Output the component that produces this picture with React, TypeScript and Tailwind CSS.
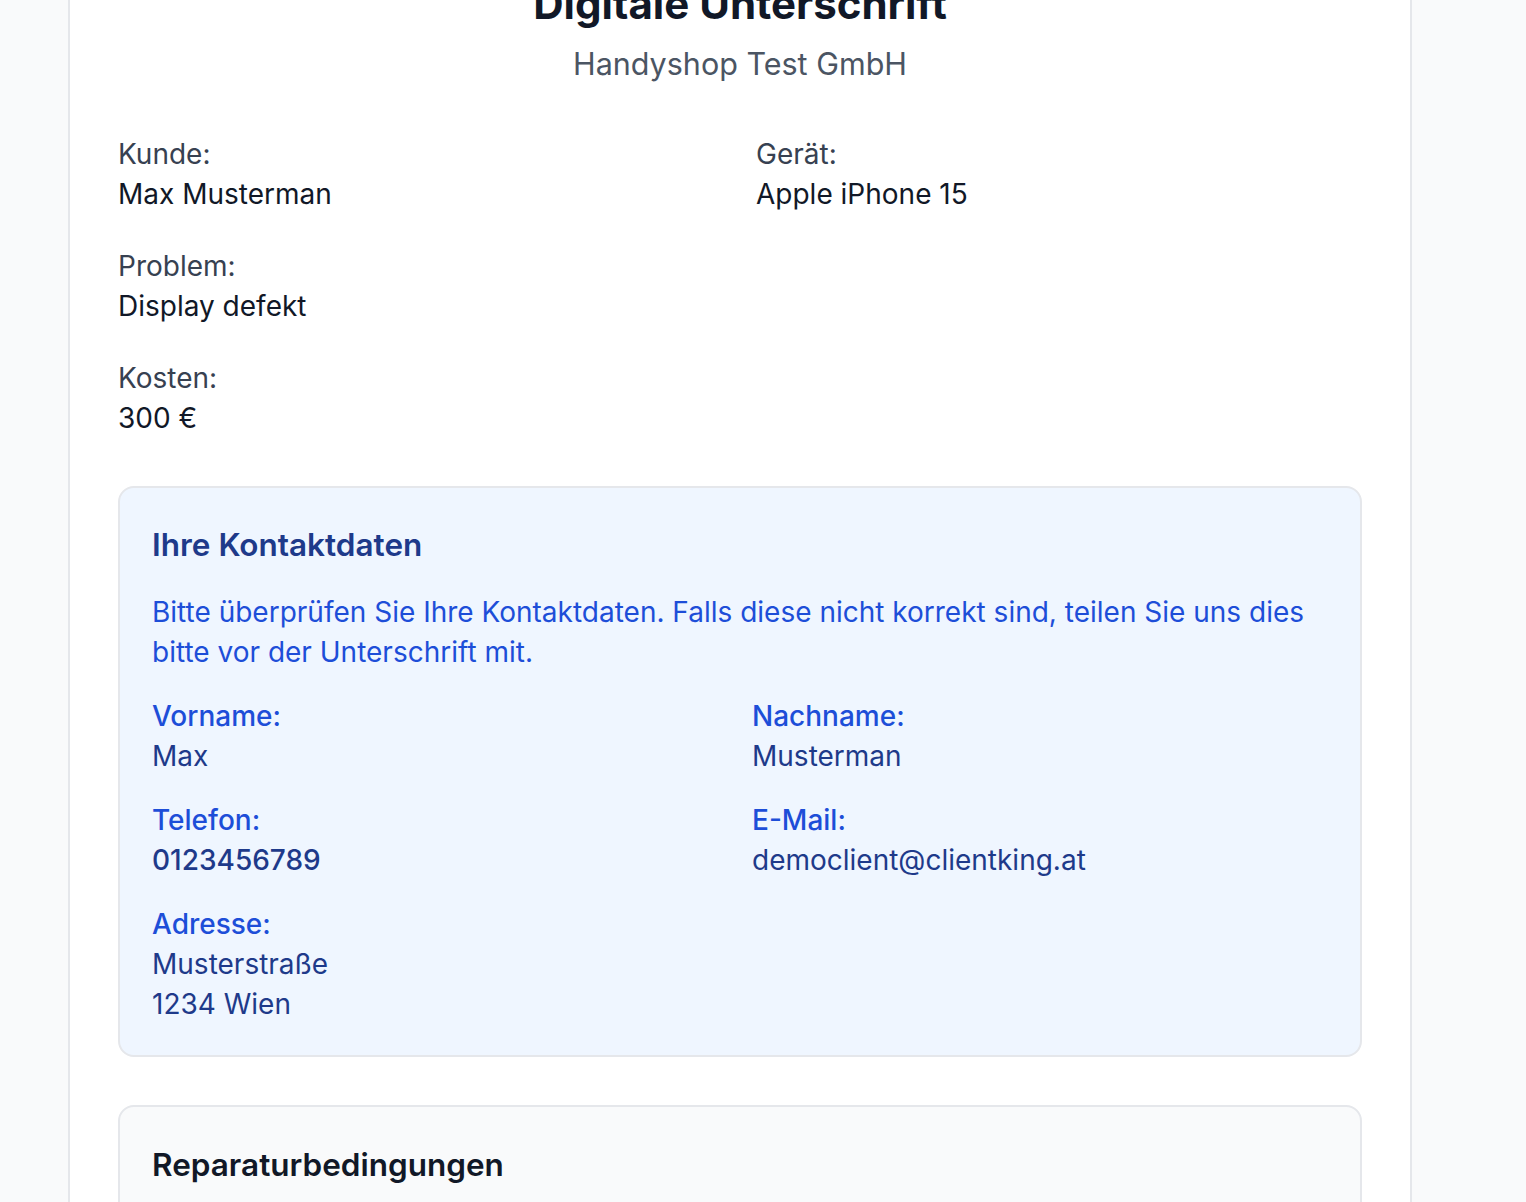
import React from 'react';

const font = { fontFamily: 'Inter, "Noto Sans", sans-serif' };

const InfoField = ({ label, children }: { label: string; children: React.ReactNode }) => (
  <div>
    <div className="text-[28px] leading-[40px] text-[#374151]">{label}</div>
    <div className="text-[28px] leading-[40px] text-[#111827]">{children}</div>
  </div>
);

const ContactField = ({ label, children, strong }: { label: string; children: React.ReactNode; strong?: boolean }) => (
  <div>
    <div className="text-[28px] leading-[40px] font-medium text-[#1d4ed8]">{label}</div>
    <div className={`text-[28px] leading-[40px] text-[#1e3a8a] ${strong ? 'font-medium' : ''}`}>{children}</div>
  </div>
);

export default function App() {
  return (
    <div className="min-h-screen bg-[#f9fafb] overflow-hidden" style={font}>
      <div className="ml-[68px] -mt-[78px] w-[1344px] bg-white border-2 border-[#e5e7eb] px-[48px] pt-[48px] pb-[48px]">
        {/* Header */}
        <div className="text-center mb-[50px]">
          <h1 className="text-[42px] leading-[64px] font-bold text-[#111827] mb-[8px]">Digitale Unterschrift</h1>
          <p className="text-[30.5px] leading-[40px] text-[#4b5563]">Handyshop Test GmbH</p>
        </div>

        {/* Auftrag */}
        <div className="grid grid-cols-2 gap-[32px] mb-[48px]">
          <InfoField label="Kunde:">Max Musterman</InfoField>
          <InfoField label="Gerät:">Apple iPhone 15</InfoField>
          <InfoField label="Problem:">Display defekt</InfoField>
          <div />
          <InfoField label="Kosten:">300 €</InfoField>
        </div>

        {/* Kontaktdaten */}
        <div className="bg-[#eff6ff] border-2 border-[#e5e7eb] rounded-[16px] px-[32px] pt-[33px] pb-[31px] mb-[48px]">
          <h2 className="text-[31.5px] leading-[48px] font-semibold text-[#1e3a8a] mb-[23px]">Ihre Kontaktdaten</h2>
          <p className="text-[28px] leading-[40px] text-[#1d4ed8] mb-[24px]">
            Bitte überprüfen Sie Ihre Kontaktdaten. Falls diese nicht korrekt sind, teilen Sie uns dies bitte vor der Unterschrift mit.
          </p>
          <div className="grid grid-cols-2 gap-[24px]">
            <ContactField label="Vorname:">Max</ContactField>
            <ContactField label="Nachname:">Musterman</ContactField>
            <ContactField label="Telefon:" strong>0123456789</ContactField>
            <ContactField label="E-Mail:">democlient@clientking.at</ContactField>
            <ContactField label="Adresse:">
              <div>Musterstraße</div>
              <div>1234 Wien</div>
            </ContactField>
          </div>
        </div>

        {/* Bedingungen */}
        <div className="bg-[#f9fafb] border-2 border-[#e5e7eb] rounded-[16px] px-[32px] pt-[34px] pb-[32px]">
          <h2 className="text-[31.5px] leading-[48px] font-semibold text-[#111827] mb-[23px]">Reparaturbedingungen</h2>
          <p className="text-[28px] leading-[40px] text-[#374151]">
            Mit Ihrer Unterschrift bestätigen Sie die Beauftragung der Reparatur zu den oben genannten Kosten.
          </p>
        </div>
      </div>
    </div>
  );
}
